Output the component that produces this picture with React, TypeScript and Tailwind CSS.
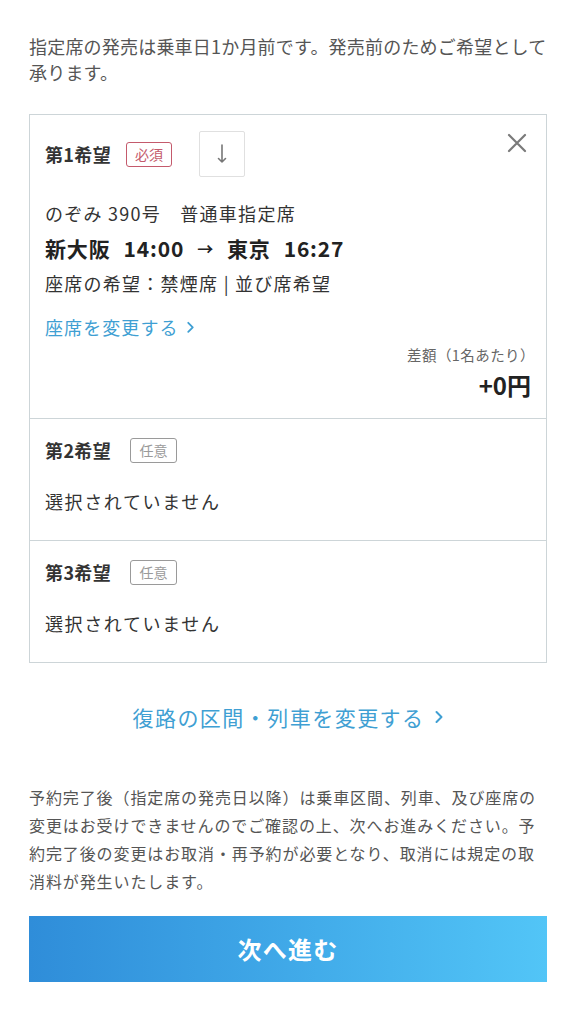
const jp = { fontFamily: '"Noto Sans CJK JP", "Noto Sans", sans-serif' };

function Badge({ label, tone }: { label: string; tone: "red" | "gray" }) {
  return (
    <span
      className={
        tone === "red"
          ? "inline-flex h-[25px] w-[46px] items-center justify-center rounded-[3px] border border-[#c45a6c] text-[14px] text-[#c45a6c]"
          : "inline-flex h-[25px] w-[47px] items-center justify-center rounded-[3px] border border-[#9a9a9a] text-[14px] text-[#9a9a9a]"
      }
    >
      {label}
    </span>
  );
}

function Chevron({ size = 10 }: { size?: number }) {
  return (
    <svg width={size} height={size * 1.4} viewBox="0 0 10 14" fill="none">
      <path d="M2.5 2l5 5-5 5" stroke="currentColor" strokeWidth="2" strokeLinecap="round" strokeLinejoin="round" />
    </svg>
  );
}

function EmptyChoice({ n }: { n: number }) {
  return (
    <div className="border-t border-[#cdd5d8] pl-[15px] pr-[15px] pt-[18px] pb-[26px]">
      <div className="flex h-[26px] items-center gap-[19px]">
        <span className="text-[18px] font-bold tracking-[0.02em] text-[#333]">第{n}希望</span>
        <Badge label="任意" tone="gray" />
      </div>
      <p className="mt-[25px] text-[18px] leading-[26px] tracking-[0.09em] text-[#333]">選択されていません</p>
    </div>
  );
}

export default function App() {
  return (
    <div className="min-h-[1024px] bg-white px-[29px] pt-[33px]" style={jp}>
      <p className="whitespace-nowrap text-[18px] leading-[26px] tracking-[0.2px] text-[#555]">
        指定席の発売は乗車日1か月前です。発売前のためご希望として
        <br />
        承ります。
      </p>

      {/* Choices */}
      <div className="mt-[29px] border border-[#cdd5d8]">
        <div className="relative pl-[15px] pr-[15px] pt-[16px] pb-[18px]">
          <div className="flex h-[46px] items-center">
            <span className="text-[18px] font-bold tracking-[0.02em] text-[#333]">第1希望</span>
            <span className="ml-[15px]">
              <Badge label="必須" tone="red" />
            </span>
            <span className="ml-[27px] flex h-[46px] w-[46px] items-center justify-center rounded-[2px] border border-[#e0e0e0] text-[#777]">
              <svg width="14" height="22" viewBox="0 0 14 22" fill="none">
                <path d="M7 2v17M3.5 15.5L7 19l3.5-3.5" stroke="currentColor" strokeWidth="1.6" strokeLinecap="round" strokeLinejoin="round" />
              </svg>
            </span>
          </div>
          <button className="absolute right-[18px] top-[17px] text-[#7a7a7a]">
            <svg width="22" height="22" viewBox="0 0 22 22" fill="none">
              <path d="M3 3l16 16M19 3L3 19" stroke="currentColor" strokeWidth="2.2" strokeLinecap="round" />
            </svg>
          </button>

          <p className="mt-[23px] text-[18px] leading-[26px] tracking-[0.07em] text-[#333]">
            のぞみ 390号　普通車指定席
          </p>
          <p className="mt-[6px] flex items-center gap-[13px] text-[21px] font-bold leading-[32px] tracking-[0.04em] text-[#222]">
            <span>新大阪</span>
            <span>14:00</span>
            <span className="text-[16px]">→</span>
            <span>東京</span>
            <span>16:27</span>
          </p>
          <p className="mt-[6px] text-[18px] leading-[26px] tracking-[0.07em] text-[#333]">
            座席の希望：禁煙席 | 並び席希望
          </p>
          <a className="mt-[18px] flex items-center gap-[7px] text-[18px] leading-[26px] tracking-[0.06em] text-[#3f9fd3]">
            座席を変更する
            <Chevron size={9} />
          </a>
          <p className="-mr-[4px] mt-[5px] text-right text-[14.5px] leading-[20px] tracking-[0.03em] text-[#666]">
            差額（1名あたり）
          </p>
          <p className="mt-[5px] text-right text-[24px] font-bold leading-[30px] text-[#222]">+0円</p>
        </div>
        <EmptyChoice n={2} />
        <EmptyChoice n={3} />
      </div>

      <a className="mt-[40px] flex items-center justify-center gap-[9px] text-[21px] leading-[28px] tracking-[0.07em] text-[#3f9fd3]">
        復路の区間・列車を変更する
        <Chevron size={10} />
      </a>

      <p className="mt-[52px] text-[16px] leading-[28px] tracking-[0.9px] text-[#555]">
        予約完了後（指定席の発売日以降）は乗車区間、列車、及び座席の
        <br />
        変更はお受けできませんのでご確認の上、次へお進みください。予
        <br />
        約完了後の変更はお取消・再予約が必要となり、取消には規定の取
        <br />
        消料が発生いたします。
      </p>

      <button className="mt-[21px] flex h-[66px] w-full items-center justify-center bg-linear-to-r from-[#2f8dd9] to-[#52c5f7] text-[24px] font-bold tracking-[0.05em] text-white">
        次へ進む
      </button>
    </div>
  );
}
